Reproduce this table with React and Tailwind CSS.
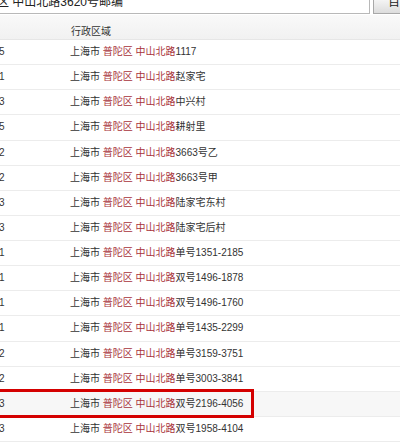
import React from "react";

const rows = [
  ["5", "1117", ""],
  ["1", "赵家宅", ""],
  ["3", "中兴村", ""],
  ["5", "耕射里", ""],
  ["2", "3663号乙", ""],
  ["2", "3663号甲", ""],
  ["3", "陆家宅东村", ""],
  ["3", "陆家宅后村", ""],
  ["1", "单号1351-2185", ""],
  ["1", "双号1496-1878", ""],
  ["1", "双号1496-1760", ""],
  ["1", "单号1435-2299", ""],
  ["2", "单号3159-3751", ""],
  ["2", "单号3003-3841", ""],
  ["3", "双号2196-4056", "hl"],
  ["3", "双号1958-4104", ""],
];

const font = { fontFamily: '"Liberation Sans", "Noto Sans CJK SC", sans-serif' };

export default function App() {
  return (
    <div className="w-[400px] h-[445px] overflow-hidden bg-white relative text-[#333]" style={font}>
      {/* search bar */}
      <div className="flex h-[14px]">
        <div className="w-[370px] h-[14px] border-r border-b border-[#b8b8b8] overflow-hidden">
          <span className="block -ml-[3px] -mt-[5px] text-[12px] leading-[14px] text-[#222] whitespace-nowrap">区 中山北路3620号邮编</span>
        </div>
        <div className="ml-[3px] flex-1 h-[14px] border-l border-b border-[#a8a8a8] bg-gradient-to-b from-[#f4f4f4] to-[#dcdcdc] overflow-hidden">
          <span className="block ml-[14px] -mt-[5px] text-[12px] leading-[14px] text-[#222] whitespace-nowrap">百度一下</span>
        </div>
      </div>
      {/* header */}
      <div className="mt-[1px] h-[25px] flex items-start bg-gradient-to-b from-[#f9f9f9] to-[#f1f1f1] border-b border-[#e6e6e6]">
        <div className="w-[71px]" />
        <div className="text-[10px] leading-[12px] mt-[11px]">行政区域</div>
      </div>
      {/* rows */}
      <div className="flex flex-col">
        {rows.map((r, i) => (
          <div
            key={i}
            className={
              "h-[25.13px] flex items-center border-b border-[#ececec] text-[10px] leading-[12px] " +
              (r[2] ? "bg-[#f7f7f7]" : "bg-white")
            }
          >
            <div className="w-[71px] -ml-[1px]">{r[0]}</div>
            <div className="whitespace-nowrap">
              <span>上海市 </span>
              <span className="text-[#a8323a]">普陀区 </span>
              <span className="text-[#a8323a]">中山北路</span>
              <span>{r[1]}</span>
            </div>
          </div>
        ))}
      </div>
      {/* red highlight box */}
      <div className="absolute left-[-4px] top-[389px] w-[258px] h-[29px] border-[3px] border-[#d40000]" />
    </div>
  );
}
